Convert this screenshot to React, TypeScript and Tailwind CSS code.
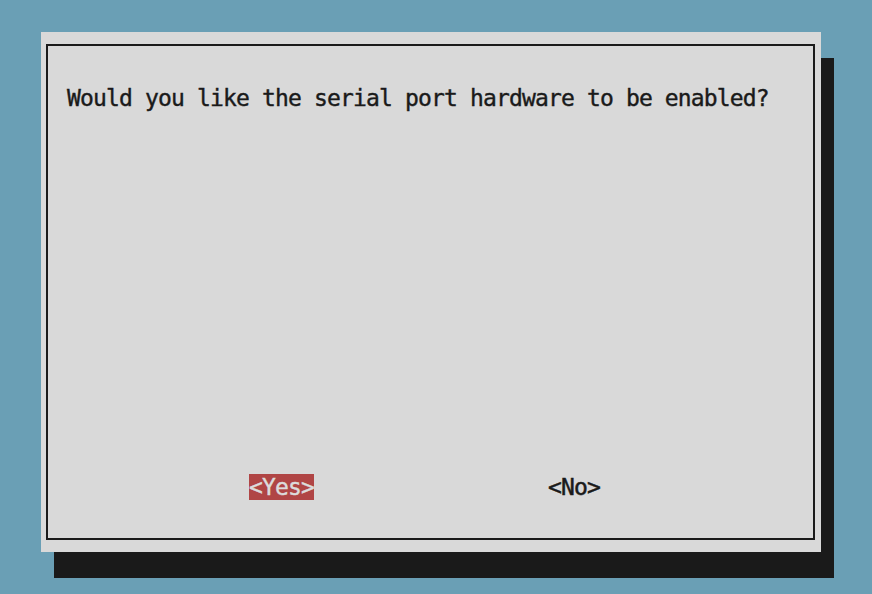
const question = 'Would you like the serial port hardware to be enabled?';

export default function App() {
  return (
    <div className="w-[872px] h-[594px] bg-[#6a9fb5] pt-[32px] pl-[41px] font-['DejaVu_Sans_Mono',monospace] text-[23px] tracking-[-0.85px] overflow-hidden">
      <div className="w-[780px] h-[520px] bg-[#d9d9d9] pt-[12px] pb-[12px] pl-[5px] pr-[6px] shadow-[13px_26px_0_#1a1a1a]">
        <div className="h-full border-2 border-[#1a1a1a] flex flex-col">
          <p className="mt-[39px] ml-[19px] leading-[26px] text-[#1a1a1a] whitespace-pre [-webkit-text-stroke:0.4px_#1a1a1a]">{question}</p>
          <div className="mt-auto mb-[38px] flex leading-[26px]">
            <span className="ml-[201px] bg-[#b04545] text-[#dcdcdc] w-[65px] text-center [-webkit-text-stroke:0.4px_#dcdcdc]">&lt;Yes&gt;</span>
            <span className="ml-[234px] text-[#1a1a1a] [-webkit-text-stroke:0.5px_#1a1a1a]">&lt;No&gt;</span>
          </div>
        </div>
      </div>
    </div>
  );
}
